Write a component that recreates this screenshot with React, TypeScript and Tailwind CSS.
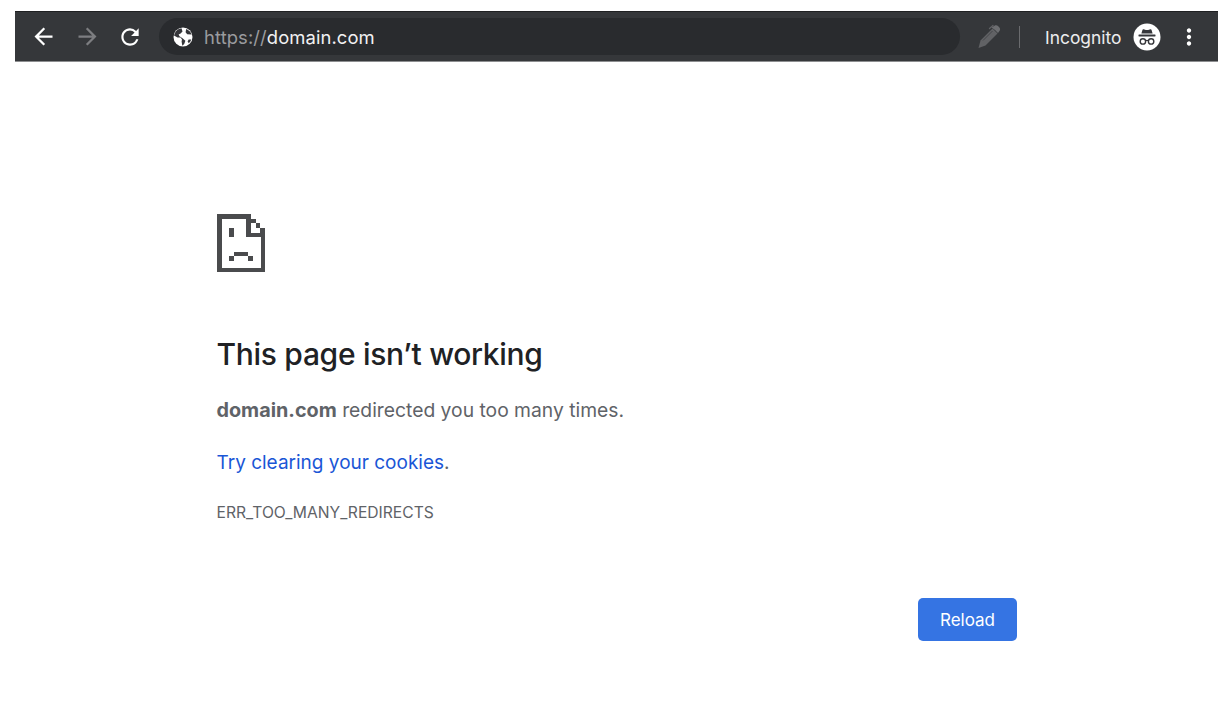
import React from "react";
import { MdArrowBack, MdArrowForward, MdRefresh, MdMoreVert } from "react-icons/md";

function SadDoc() {
  return (
    <svg width="48" height="58" viewBox="0 0 48 58" fill="#4a4b4d" shapeRendering="crispEdges" aria-hidden="true">
      <path d="M0 0H33.5V18.5H48V58H0ZM4.5 4.5V53.5H43.5V23H29V4.5Z" fillRule="evenodd" />
      <rect x="34" y="4.5" width="4.5" height="4.5" />
      <rect x="38.5" y="9" width="4.5" height="4.5" />
      <rect x="43" y="13.5" width="5" height="5" />
      <rect x="12" y="13.5" width="4.5" height="9.5" />
      <rect x="17" y="37.5" width="13.5" height="4.5" />
      <rect x="12" y="42" width="4.5" height="4.5" />
      <rect x="31" y="42" width="4.5" height="4.5" />
    </svg>
  );
}

function Globe() {
  return (
    <svg width="20" height="20" viewBox="0 0 20 20" aria-hidden="true" className="shrink-0">
      <circle cx="10" cy="10" r="9.5" fill="#ffffff" />
      <path d="M8.5 1.2C6 1.6 3.6 3 2.2 5.4L1 8.5L4.5 10.5L7.5 10.6L9 12.5L8.6 14.5L9.3 18.8L11.2 17L12.4 13.8L9.5 11.2L6.5 9.2L5.6 7.4L7.6 6.6L9.5 4.5Z" fill="#35363a" />
      <path d="M13.2 1.9L12.6 5.2L14.2 7.2L18.6 7.4C17.8 5 15.8 2.9 13.2 1.9Z" fill="#35363a" />
      <path d="M15.6 12.4L14.6 14.6L15.8 16.2C17 15 17.9 13.7 18.3 12.4Z" fill="#35363a" />
    </svg>
  );
}

function Pen() {
  return (
    <svg width="26" height="26" viewBox="0 0 26 26" fill="none" aria-hidden="true">
      <path d="M2.5 24L4.5 16.5L16.5 4.5L21.5 9.5L9.5 21.5Z" fill="#616265" />
      <path d="M15.5 3.5L18.5 1.8C20 1 21 1.2 22.5 2.5C24 4 24.5 5 23.8 6.5L22 9L19 6" fill="#6d6e71" />
      <path d="M13.5 4.5L17 1.5" stroke="#616265" strokeWidth="1.3" strokeLinecap="round" />
      <path d="M7 16.5L16.5 7" stroke="#45464a" strokeWidth="1" />
    </svg>
  );
}

function Incognito() {
  return (
    <svg width="28" height="28" viewBox="0 0 28 28" aria-hidden="true">
      <circle cx="14" cy="14" r="13.5" fill="#ffffff" />
      <path d="M9.5 6.8C9.7 6.2 10.1 6 10.7 6.2L12.8 6.9C13.6 7.1 14.4 7.1 15.2 6.9L17.3 6.2C17.9 6 18.3 6.2 18.5 6.8L19.6 10.5H8.4Z" fill="#35363a" />
      <rect x="5.5" y="11.6" width="17" height="1.9" rx="0.4" fill="#35363a" />
      <circle cx="9.9" cy="18.4" r="2.7" fill="none" stroke="#35363a" strokeWidth="1.4" />
      <circle cx="18.1" cy="18.4" r="2.7" fill="none" stroke="#35363a" strokeWidth="1.4" />
      <path d="M12.5 17.8C13.5 17.2 14.5 17.2 15.5 17.8" fill="none" stroke="#35363a" strokeWidth="1.3" />
    </svg>
  );
}

export default function App() {
  return (
    <div className="min-h-[716px] bg-white font-['Inter','Liberation_Sans',sans-serif] pt-[11px] pl-[15px] pr-[10px]">
      <header className="h-[51px] bg-[#35373a] border-t border-t-[#1f2022] border-b border-b-[#8d8e90] flex items-center pl-[15px]">
        <MdArrowBack className="text-white shrink-0" size={27} />
        <MdArrowForward className="text-[#7d7e81] shrink-0 ml-[17px]" size={27} />
        <MdRefresh className="text-white shrink-0 ml-[16px]" size={26} />
        <div className="ml-[16px] h-[37px] w-[801px] shrink-0 rounded-full bg-[#292b2e] flex items-center pl-[14px]">
          <Globe />
          <span className="ml-[11px] pt-[2px] text-[18.4px] leading-none tracking-[0.1px]">
            <span className="text-[#9a9b9e]">https://</span>
            <span className="text-[#f1f1f2]">domain.com</span>
          </span>
        </div>
        <div className="ml-[16px] shrink-0"><Pen /></div>
        <div className="ml-[17px] w-px h-[22px] bg-[#6a6b6e] shrink-0" />
        <span className="ml-[25px] pt-[2px] text-[17.4px] leading-none text-[#ececed] shrink-0">Incognito</span>
        <div className="ml-[12px] shrink-0"><Incognito /></div>
        <MdMoreVert className="text-white shrink-0 ml-[15px]" size={26} />
      </header>

      <main className="pl-[201.5px] pt-[152px]">
        <SadDoc />
        <h1 className="mt-[62px] text-[30px] leading-[40px] font-medium text-[#202124] tracking-[-0.3px]">This page isn’t working</h1>
        <p className="mt-[22px] text-[19.3px] leading-[28px] text-[#5f6368]">
          <strong className="text-[19.8px] font-bold">domain.com</strong> redirected you too many times.
        </p>
        <a className="block mt-[25px] text-[19px] leading-[28px] text-[#1a56d6]">
          Try clearing your cookies<span className="text-[#5f6368]">.</span>
        </a>
        <p className="mt-[26px] text-[15.65px] leading-[20px] text-[#5f6368]">ERR_TOO_MANY_REDIRECTS</p>
        <div className="mt-[75px] pl-[701.5px]">
          <button className="w-[99px] h-[43px] pt-[2px] rounded-[5px] bg-[#3574e3] text-white text-[17px] leading-none">Reload</button>
        </div>
      </main>
    </div>
  );
}
